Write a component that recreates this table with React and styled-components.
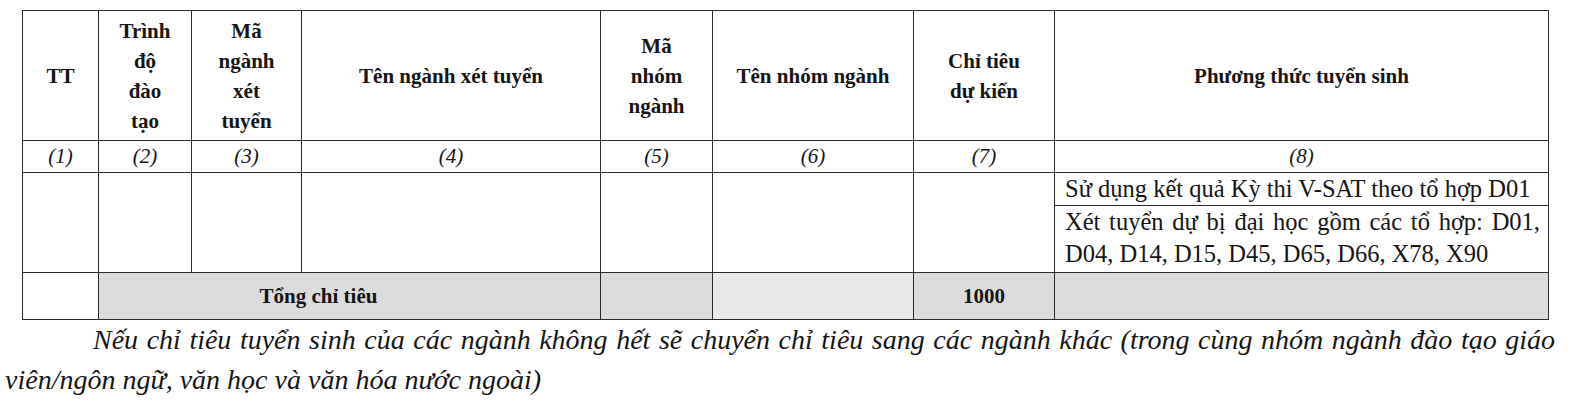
import React from "react";
import styled, { createGlobalStyle } from "styled-components";

const GlobalStyle = createGlobalStyle`
  html, body {
    margin: 0;
    padding: 0;
    background: #ffffff;
  }
  body {
    font-family: "Liberation Serif", "Times New Roman", serif;
    color: #151515;
  }
`;

const Page = styled.div`
  width: 1573px;
  height: 411px;
  overflow: hidden;
  padding-top: 10px;
  box-sizing: border-box;
`;

const Table = styled.table`
  margin-left: 22px;
  width: 1526px;
  border-collapse: collapse;
  table-layout: fixed;
`;

const Head = styled.th`
  border: 1.5px solid #2b2b2b;
  font-weight: bold;
  font-size: 21px;
  line-height: 30px;
  text-align: center;
  vertical-align: middle;
  padding: 0 2px;
  height: 129px;
`;

const NumCell = styled.td`
  border: 1.5px solid #2b2b2b;
  font-style: italic;
  font-size: 21px;
  text-align: center;
  height: 31px;
  padding: 0;
`;

const Cell = styled.td`
  border: 1.5px solid #2b2b2b;
  padding: 0;
`;

const MethodCell = styled.td`
  border: 1.5px solid #2b2b2b;
  font-size: 24.5px;
  line-height: 32px;
  padding: 0 8px 0 10px;
  text-align: ${(p) => (p.$justify ? "justify" : "left")};
  height: ${(p) => p.$h}px;
  vertical-align: top;
  white-space: ${(p) => (p.$justify ? "normal" : "nowrap")};
`;

const TotalCell = styled.td`
  border: 1.5px solid #2b2b2b;
  height: 46px;
  font-weight: bold;
  font-size: 21px;
  text-align: center;
  padding: 0 ${(p) => p.$shift || 0}px 0 0;
  background-color: ${(p) => (p.$plain ? "#ffffff" : p.$light ? "#e9e9e9" : "#dcdcdc")};
`;

const Note = styled.div`
  font-style: italic;
  font-size: 28px;
  line-height: 40px;
  padding-left: 5px;
  width: 1550px;
`;

const NoteFirst = styled.div`
  text-indent: 88px;
  text-align: justify;
  text-align-last: justify;
  white-space: nowrap;
`;

const widths = [76, 93, 110, 299, 112, 201, 141, 494];

export default function App() {
  return (
    <Page>
      <GlobalStyle />
      <Table>
        <colgroup>
          {widths.map((w, i) => (
            <col key={i} style={{ width: w }} />
          ))}
        </colgroup>
        <thead>
          <tr>
            <Head>TT</Head>
            <Head>
              Trình
              <br />
              độ
              <br />
              đào
              <br />
              tạo
            </Head>
            <Head>
              Mã
              <br />
              ngành
              <br />
              xét
              <br />
              tuyển
            </Head>
            <Head>Tên ngành xét tuyển</Head>
            <Head>
              Mã
              <br />
              nhóm
              <br />
              ngành
            </Head>
            <Head>Tên nhóm ngành</Head>
            <Head>
              Chỉ tiêu
              <br />
              dự kiến
            </Head>
            <Head>Phương thức tuyển sinh</Head>
          </tr>
        </thead>
        <tbody>
          <tr>
            {["(1)", "(2)", "(3)", "(4)", "(5)", "(6)", "(7)", "(8)"].map((n) => (
              <NumCell key={n}>{n}</NumCell>
            ))}
          </tr>
          <tr>
            <Cell rowSpan={2} />
            <Cell rowSpan={2} />
            <Cell rowSpan={2} />
            <Cell rowSpan={2} />
            <Cell rowSpan={2} />
            <Cell rowSpan={2} />
            <Cell rowSpan={2} />
            <MethodCell $h={31}>Sử dụng kết quả Kỳ thi V-SAT theo tổ hợp D01</MethodCell>
          </tr>
          <tr>
            <MethodCell $h={66} $justify>
              Xét tuyển dự bị đại học gồm các tổ hợp: D01, D04, D14, D15, D45, D65, D66, X78, X90
            </MethodCell>
          </tr>
          <tr>
            <TotalCell $plain />
            <TotalCell colSpan={3} $shift={62}>
              Tổng chỉ tiêu
            </TotalCell>
            <TotalCell />
            <TotalCell $light />
            <TotalCell>1000</TotalCell>
            <TotalCell />
          </tr>
        </tbody>
      </Table>
      <Note>
        <NoteFirst>
          Nếu chỉ tiêu tuyển sinh của các ngành không hết sẽ chuyển chỉ tiêu sang các ngành khác (trong cùng nhóm ngành đào tạo giáo
        </NoteFirst>
        <div>viên/ngôn ngữ, văn học và văn hóa nước ngoài)</div>
      </Note>
    </Page>
  );
}
